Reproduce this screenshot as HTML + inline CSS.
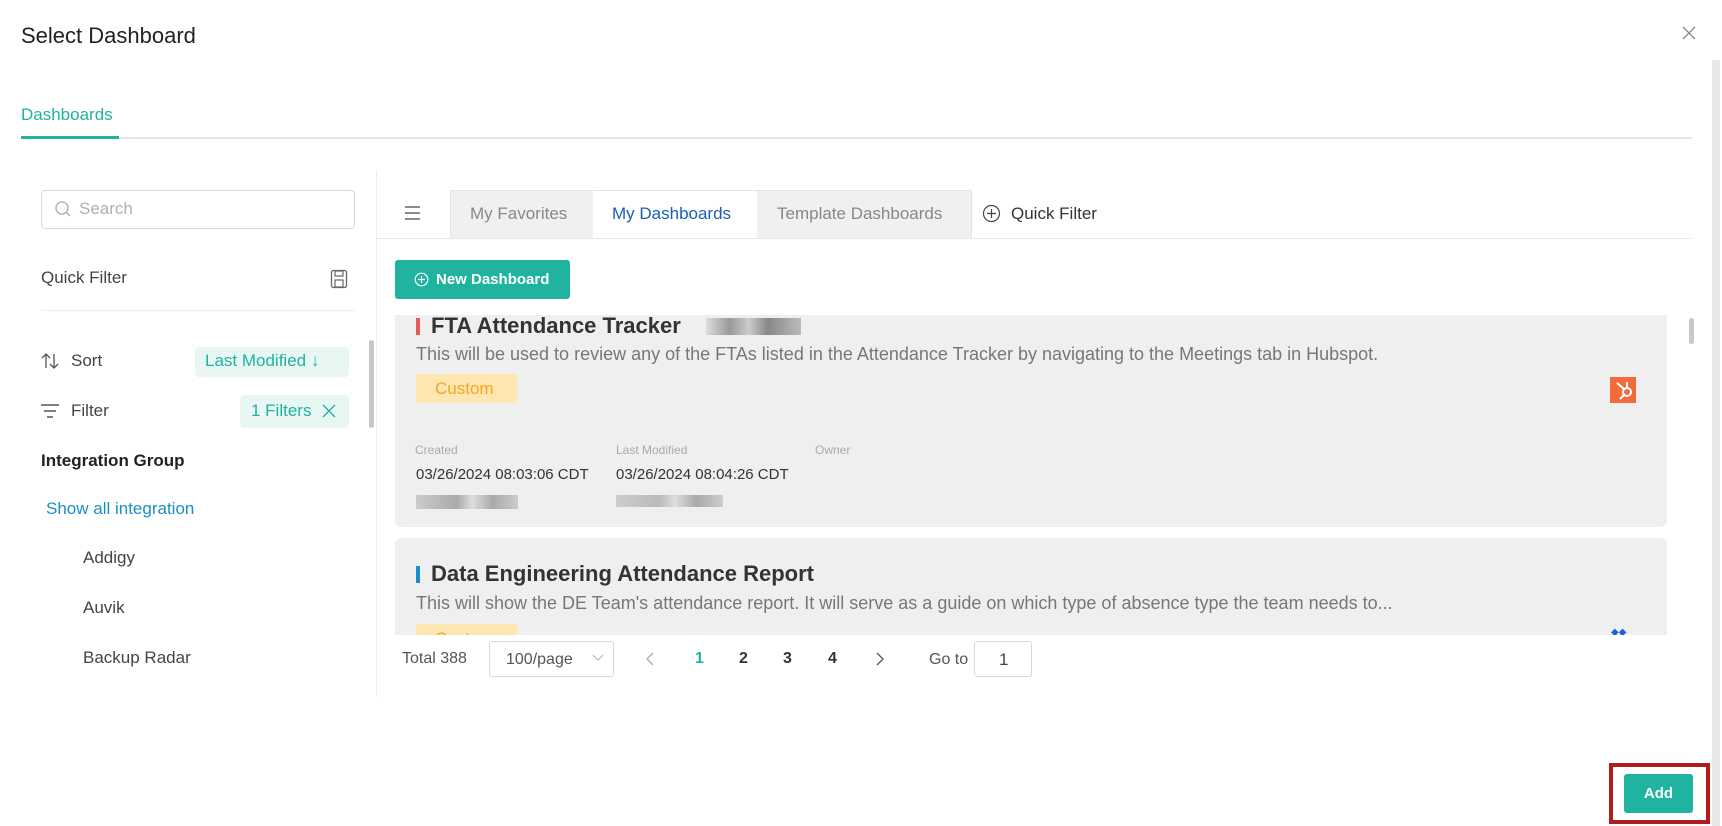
<!DOCTYPE html>
<html><head><meta charset="utf-8"><style>
*{box-sizing:border-box;margin:0;padding:0}
body{width:1722px;height:826px;background:#fff;font-family:"Liberation Sans",sans-serif;position:relative;overflow:hidden;color:#333}
.a{position:absolute;white-space:nowrap}
.teal{color:#1fb3a0}
</style></head><body>
<div class="a" style="left:21px;top:23px;font-size:22px;color:#222">Select Dashboard</div>
<svg class="a" style="left:1682px;top:26px" width="14" height="14"><path d="M1 1L13 13M13 1L1 13" stroke="#888" stroke-width="1.3"/></svg>
<div class="a" style="left:1712px;top:60px;width:8px;height:766px;background:#e8e8e8"></div>
<div class="a teal" style="left:21px;top:105px;font-size:17px">Dashboards</div>
<div class="a" style="left:21px;top:137px;width:1671px;height:2px;background:#e2e5ea"></div>
<div class="a" style="left:21px;top:136px;width:98px;height:3px;background:#1fb3a0"></div>

<div class="a" style="left:41px;top:190px;width:314px;height:39px;border:1px solid #d9d9d9;border-radius:4px"></div>
<svg class="a" style="left:54px;top:200px" width="18" height="18"><circle cx="8" cy="8" r="6" fill="none" stroke="#aaa" stroke-width="1.3"/><path d="M12.5 12.5L16 16" stroke="#aaa" stroke-width="1.3"/></svg>
<div class="a" style="left:79px;top:199px;font-size:17px;color:#b0b0b0">Search</div>
<div class="a" style="left:41px;top:268px;font-size:17px;color:#444">Quick Filter</div>
<svg class="a" style="left:330px;top:269px" width="19" height="20"><rect x="1.5" y="1.5" width="15" height="17" rx="2" fill="none" stroke="#666" stroke-width="1.3"/><rect x="5" y="2" width="8" height="5" fill="none" stroke="#666" stroke-width="1.2"/><rect x="5" y="11" width="8" height="7" fill="none" stroke="#666" stroke-width="1.2"/></svg>
<div class="a" style="left:41px;top:310px;width:314px;height:1px;background:#eee"></div>
<svg class="a" style="left:40px;top:351px" width="20" height="20"><path d="M6 17V3M2 7l4-4 4 4M14 3v14M10 13l4 4 4-4" fill="none" stroke="#555" stroke-width="1.3"/></svg>
<div class="a" style="left:71px;top:351px;font-size:17px;color:#444">Sort</div>
<div class="a teal" style="left:195px;top:347px;width:154px;height:30px;background:#e8f7f4;border-radius:4px;font-size:17px;padding:4px 0 0 10px">Last Modified <span style="font-size:17px">↓</span></div>
<svg class="a" style="left:40px;top:401px" width="20" height="20"><path d="M1 4h18M4 10h12M7 16h6" stroke="#555" stroke-width="1.4"/></svg>
<div class="a" style="left:71px;top:401px;font-size:17px;color:#444">Filter</div>
<div class="a teal" style="left:240px;top:395px;width:109px;height:33px;background:#e8f7f4;border-radius:4px;font-size:17px;padding:6px 0 0 11px">1 Filters</div>
<svg class="a" style="left:322px;top:404px" width="14" height="14"><path d="M1 1L13 13M13 1L1 13" stroke="#1fb3a0" stroke-width="1.4"/></svg>
<div class="a" style="left:41px;top:451px;font-size:17px;font-weight:bold;color:#222">Integration Group</div>
<div class="a" style="left:46px;top:499px;font-size:17px;color:#1a8ec8">Show all integration</div>
<div class="a" style="left:83px;top:548px;font-size:17px;color:#444">Addigy</div>
<div class="a" style="left:83px;top:598px;font-size:17px;color:#444">Auvik</div>
<div class="a" style="left:83px;top:648px;font-size:17px;color:#444">Backup Radar</div>
<div class="a" style="left:369px;top:340px;width:5px;height:88px;background:#c8c8c8;border-radius:3px"></div>
<div class="a" style="left:376px;top:170px;width:1px;height:527px;background:#eee"></div>

<svg class="a" style="left:405px;top:206px" width="16" height="14"><path d="M0 1h15M0 7h15M0 13h15" stroke="#666" stroke-width="1.4"/></svg>
<div class="a" style="left:450px;top:190px;width:522px;height:48px;background:#f0f0f0;border:1px solid #e4e4e4;border-bottom:none"></div>
<div class="a" style="left:593px;top:190px;width:164px;height:49px;background:#fff;border-top:1px solid #e4e4e4"></div>
<div class="a" style="left:470px;top:204px;font-size:17px;color:#888">My Favorites</div>
<div class="a" style="left:612px;top:204px;font-size:17px;color:#1a5fb4">My Dashboards</div>
<div class="a" style="left:777px;top:204px;font-size:17px;color:#888">Template Dashboards</div>
<svg class="a" style="left:982px;top:204px" width="19" height="19"><circle cx="9.5" cy="9.5" r="8" fill="none" stroke="#444" stroke-width="1.2"/><path d="M9.5 5v9M5 9.5h9" stroke="#444" stroke-width="1.2"/></svg>
<div class="a" style="left:1011px;top:204px;font-size:17px;color:#333">Quick Filter</div>
<div class="a" style="left:376px;top:238px;width:1316px;height:1px;background:#e8e8e8"></div>

<div class="a" style="left:395px;top:260px;width:175px;height:39px;background:#1fb3a0;border-radius:3px;color:#fff;font-size:15px;font-weight:bold;padding:11px 0 0 41px">New Dashboard</div>
<svg class="a" style="left:414px;top:272px" width="15" height="15"><circle cx="7.5" cy="7.5" r="6.3" fill="none" stroke="#fff" stroke-width="1.2"/><path d="M7.5 4v7M4 7.5h7" stroke="#fff" stroke-width="1.2"/></svg>

<div class="a" style="left:395px;top:315px;width:1300px;height:320px;overflow:hidden">
  <div class="a" style="left:0;top:-30px;width:1272px;height:242px;background:#efefef;border-radius:6px"></div>
  <div class="a" style="left:21px;top:3px;width:4px;height:17px;background:#e85a5a"></div>
  <div class="a" style="left:36px;top:-2px;font-size:22px;font-weight:bold;color:#333">FTA Attendance Tracker</div>
  <div class="a" style="left:311px;top:3px;width:95px;height:17px;background:linear-gradient(90deg,#ddd,#999 25%,#ccc 45%,#888 65%,#bbb)"></div>
  <div class="a" style="left:21px;top:29px;font-size:18px;color:#777">This will be used to review any of the FTAs listed in the Attendance Tracker by navigating to the Meetings tab in Hubspot.</div>
  <div class="a" style="left:21px;top:59px;width:101px;height:29px;background:#fde6b0;color:#f5a623;font-size:17px;padding:5px 0 0 19px">Custom</div>
  <div class="a" style="left:1215px;top:62px;width:26px;height:26px;background:#f26b3a"></div>
  <svg class="a" style="left:1215px;top:62px" width="26" height="26"><circle cx="17" cy="15" r="4" fill="none" stroke="#fff" stroke-width="2"/><path d="M14 12L7 6M17 11V5M14 18l-4 4" stroke="#fff" stroke-width="2"/></svg>
  <div class="a" style="left:20px;top:128px;font-size:12px;color:#aaa">Created</div>
  <div class="a" style="left:221px;top:128px;font-size:12px;color:#aaa">Last Modified</div>
  <div class="a" style="left:420px;top:128px;font-size:12px;color:#aaa">Owner</div>
  <div class="a" style="left:21px;top:151px;font-size:15px;color:#333">03/26/2024 08:03:06 CDT</div>
  <div class="a" style="left:221px;top:151px;font-size:15px;color:#333">03/26/2024 08:04:26 CDT</div>
  <div class="a" style="left:21px;top:180px;width:102px;height:14px;background:linear-gradient(90deg,#ccc,#aaa 40%,#ddd 55%,#aaa 75%,#ccc)"></div>
  <div class="a" style="left:221px;top:180px;width:107px;height:12px;background:linear-gradient(90deg,#ccc,#bbb 40%,#ddd 55%,#aaa 75%,#ccc)"></div>
  <div class="a" style="left:0;top:223px;width:1272px;height:120px;background:#efefef;border-radius:6px"></div>
  <div class="a" style="left:21px;top:251px;width:4px;height:17px;background:#1a8ec8"></div>
  <div class="a" style="left:36px;top:246px;font-size:22px;font-weight:bold;color:#333">Data Engineering Attendance Report</div>
  <div class="a" style="left:21px;top:278px;font-size:18px;color:#777">This will show the DE Team's attendance report. It will serve as a guide on which type of absence type the team needs to...</div>
  <div class="a" style="left:21px;top:309px;width:101px;height:29px;background:#fde6b0;color:#f5a623;font-size:17px;padding:5px 0 0 19px">Custom</div>
  <div class="a" style="left:1216px;top:312px;width:24px;height:10px;color:#1a5fe0;font-size:10px">◆◆</div>
  <div class="a" style="left:1294px;top:3px;width:5px;height:26px;background:#c8c8c8;border-radius:3px"></div>
</div>

<div class="a" style="left:402px;top:650px;font-size:16px;color:#555">Total 388</div>
<div class="a" style="left:489px;top:641px;width:125px;height:36px;border:1px solid #d9d9d9;border-radius:3px;font-size:16px;color:#555;padding:9px 0 0 16px">100/page</div>
<svg class="a" style="left:592px;top:654px" width="12" height="8"><path d="M1 1l5 5 5-5" fill="none" stroke="#bbb" stroke-width="1.2"/></svg>
<svg class="a" style="left:646px;top:652px" width="8" height="14"><path d="M7 1L1 7l6 6" fill="none" stroke="#aaa" stroke-width="1.3"/></svg>
<div class="a teal" style="left:695px;top:650px;font-size:16px;font-weight:bold">1</div>
<div class="a" style="left:739px;top:650px;font-size:16px;font-weight:bold;color:#333">2</div>
<div class="a" style="left:783px;top:650px;font-size:16px;font-weight:bold;color:#333">3</div>
<div class="a" style="left:828px;top:650px;font-size:16px;font-weight:bold;color:#333">4</div>
<svg class="a" style="left:876px;top:652px" width="8" height="14"><path d="M1 1l6 6-6 6" fill="none" stroke="#555" stroke-width="1.3"/></svg>
<div class="a" style="left:929px;top:651px;font-size:16px;color:#555">Go to</div>
<div class="a" style="left:974px;top:641px;width:58px;height:36px;border:1px solid #d9d9d9;border-radius:3px;font-size:17px;color:#444;padding:8px 0 0 24px">1</div>

<div class="a" style="left:1609px;top:763px;width:101px;height:61px;border:4px solid #b01c1c"></div>
<div class="a" style="left:1624px;top:774px;width:69px;height:39px;background:#1fb3a0;border-radius:3px;color:#fff;font-size:15px;font-weight:bold;text-align:center;padding-top:11px">Add</div>
</body></html>
